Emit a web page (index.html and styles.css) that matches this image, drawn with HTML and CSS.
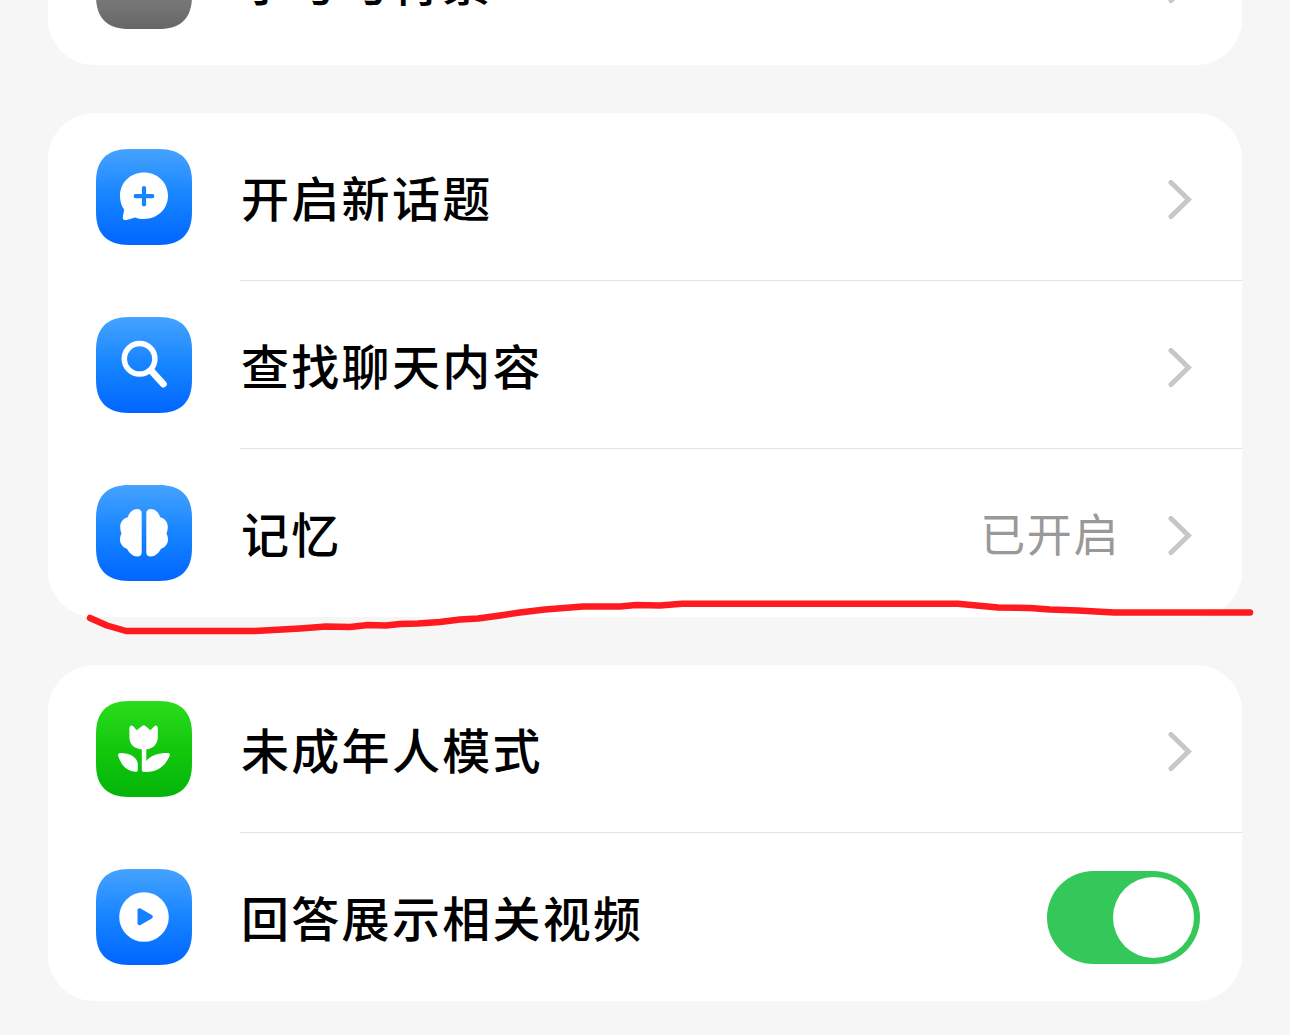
FILE: index.html
```html
<!DOCTYPE html>
<html lang="zh-CN">
<head>
    <meta charset="utf-8">
    <title>设置</title>
    <link rel="stylesheet" href="styles.css">
</head>
<body>
    <!-- shared shapes -->
    <svg class="defs" width="0" height="0">
        <defs>
            <linearGradient id="blue" x1="0" y1="0" x2="0" y2="1">
                <stop offset="0" stop-color="#45a3ff"/>
                <stop offset="0.5" stop-color="#1684ff"/>
                <stop offset="1" stop-color="#0066ff"/>
            </linearGradient>
            <linearGradient id="green" x1="0" y1="0" x2="0" y2="1">
                <stop offset="0" stop-color="#2bdc1c"/>
                <stop offset="0.5" stop-color="#13c70d"/>
                <stop offset="1" stop-color="#04b50a"/>
            </linearGradient>
            <linearGradient id="gray" x1="0" y1="0" x2="0" y2="1">
                <stop offset="0" stop-color="#a0a0a0"/>
                <stop offset="1" stop-color="#666666"/>
            </linearGradient>
            <path id="tile" d="M33 0H63C85 0 96 11 96 33V63C96 85 85 96 63 96H33C11 96 0 85 0 63V33C0 11 11 0 33 0Z"/>
            <path id="chevron" d="M3 3.5L20.5 20.5L3 37.5"/>
        </defs>
    </svg>

    <div class="settings">
        <div class="card">
            <div class="row">
                <svg class="icon" viewBox="0 0 96 96"><use href="#tile" fill="url(#gray)"/></svg>
                <div class="content">
                    <span class="label">字号与背景</span>
                    <svg class="chevron" viewBox="0 0 24 41"><use href="#chevron"/></svg>
                </div>
            </div>
        </div>

        <div class="card">
            <div class="row">
                <svg class="icon" viewBox="0 0 96 96">
                    <use href="#tile" fill="url(#blue)"/>
                    <path fill="#fff" d="M48 23.5C61.500 23.500 72 33.500 72 46.800C72 60 61.500 70 48 70C44.800 70 42 69.400 39.200 68.400L30.500 71C28 71.700 26.300 70 26.800 67.700L28.200 60.700C25.400 57 24 52.200 24 46.800C24 33.500 34.500 23.500 48 23.500Z"/>
                    <path class="plus" d="M48 39V55.500M39.700 47.200H56.300"/>
                </svg>
                <div class="content">
                    <span class="label">开启新话题</span>
                    <svg class="chevron" viewBox="0 0 24 41"><use href="#chevron"/></svg>
                </div>
            </div>
            <div class="row">
                <svg class="icon" viewBox="0 0 96 96">
                    <use href="#tile" fill="url(#blue)"/>
                    <circle class="lens" cx="43.600" cy="41.800" r="15.300"/>
                    <path class="handle" d="M55 53.500L67.300 67"/>
                </svg>
                <div class="content">
                    <span class="label">查找聊天内容</span>
                    <svg class="chevron" viewBox="0 0 24 41"><use href="#chevron"/></svg>
                </div>
            </div>
            <div class="row">
                <svg class="icon" viewBox="0 0 96 96">
                    <use href="#tile" fill="url(#blue)"/>
                    <path id="brain" fill="#fff" d="M41.200 24C44.200 24 45.700 25.500 45.700 28.500V67C45.700 70 44.200 71.500 41.200 71.500C37 71.500 33.500 68.500 31 63.800C27 62.500 24 59 24 54.500C24 52.300 24.700 50.200 25.500 48.500C24.800 46.800 24.200 44.500 24.200 42C24.200 37 27.200 33.300 31.800 32.200C33.500 27 37 24 41.200 24Z"/>
                    <use href="#brain" transform="matrix(-1 0 0 1 96 0)"/>
                </svg>
                <div class="content">
                    <span class="label">记忆</span>
                    <span class="value">已开启</span>
                    <svg class="chevron" viewBox="0 0 24 41"><use href="#chevron"/></svg>
                </div>
            </div>
        </div>

        <div class="card">
            <div class="row">
                <svg class="icon" viewBox="0 0 96 96">
                    <use href="#tile" fill="url(#green)"/>
                    <g fill="#fff">
                        <path d="M33.400 27.500C33.400 24.500 35.500 23.500 37.200 25.300L40.700 29.200L46.200 25C47.300 24 48.300 24 49.400 25L54.500 29.200L58.300 25.300C60 23.500 61.800 24.500 61.800 27.500V36C61.800 43 57.500 47.500 50.300 48.500V60C54.500 54.500 62 52 71.500 52C73.700 52 74.500 53.300 73.500 55.300C69.500 64.500 62 71 50.500 71H48C46.500 71 45.800 70 45.800 68.500V48.500C37.500 47.500 33.400 43 33.400 36Z"/>
                        <path d="M24.500 52C34 52 41.500 56.500 41.800 63V69C41.800 70.300 41 71 39.800 70.800C30.500 70 25 64 22.300 55.300C21.700 53.300 22.500 52 24.500 52Z"/>
                    </g>
                </svg>
                <div class="content">
                    <span class="label">未成年人模式</span>
                    <svg class="chevron" viewBox="0 0 24 41"><use href="#chevron"/></svg>
                </div>
            </div>
            <div class="row">
                <svg class="icon" viewBox="0 0 96 96">
                    <use href="#tile" fill="url(#blue)"/>
                    <circle cx="48" cy="48" r="24.800" fill="#fff"/>
                    <path class="play" d="M43.500 41.300V54.300L54.800 47.800Z"/>
                </svg>
                <div class="content">
                    <span class="label">回答展示相关视频</span>
                    <div class="switch"><div class="knob"></div></div>
                </div>
            </div>
        </div>
    </div>

    <!-- pen stroke over the list -->
    <svg class="stroke" viewBox="0 0 1290 60">
        <path d="M90 28L107 35.500L126 41H255L300 38.500L326 36.500L350 37L368 35L386 35.500L400 34L418 33.500L440 32L460 29.500L478 28.500L500 25.500L520 22.500L545 19.500L583 16.500H620L636 15L660 15.500L682 13.800H958L998 17.500L1030 18L1050 19.500L1078 20.500L1114 22.500H1250"/>
    </svg>
</body>
</html>
```
FILE: styles.css
```css
body {
    margin: 0;
    height: 1035px;
    overflow: hidden;
    position: relative;
    background-color: #f6f6f6;
    font-family: "Noto Sans CJK SC", sans-serif;
    color: #000;
}
.defs {
    position: absolute;
}
/* the list is scrolled, first row is partly off screen */
.settings {
    margin: -103px 48px 0;
    display: flex;
    flex-direction: column;
    gap: 48px;
}
.card {
    background-color: #fff;
    border-radius: 46px;
    overflow: hidden;
}
.row {
    display: flex;
    align-items: center;
    height: 168px;
    padding-left: 48px;
    gap: 48px;
}
.icon {
    width: 96px;
    height: 96px;
    flex-shrink: 0;
}
.content {
    flex: 1;
    height: 100%;
    box-sizing: border-box;
    display: flex;
    align-items: center;
    padding-right: 50px;
    border-bottom: 1px solid #e4e4e4;
}
.row:last-child .content {
    border-bottom-color: transparent;
}
.label {
    flex: 1;
    font-size: 48px;
    font-weight: 500;
    letter-spacing: 2.3px;
    line-height: 72px;
    padding-left: 1px;
    padding-bottom: 2px;
}
.value {
    font-size: 45px;
    font-weight: 400;
    letter-spacing: 1.6px;
    line-height: 66px;
    margin-right: 48px;
    color: #999;
}
.chevron {
    width: 24px;
    height: 41px;
    margin-top: 5px;
    fill: none;
    stroke: #c7c7c7;
    stroke-width: 5px;
    stroke-linecap: round;
}
.plus {
    fill: none;
    stroke: #1684ff;
    stroke-width: 4.2px;
    stroke-linecap: round;
}
.lens {
    fill: none;
    stroke: #fff;
    stroke-width: 5.5px;
}
.handle {
    stroke: #fff;
    stroke-width: 7px;
    stroke-linecap: round;
}
.play {
    fill: #1480ff;
    stroke: #1480ff;
    stroke-width: 4px;
    stroke-linejoin: round;
}
.switch {
    display: flex;
    align-items: center;
    justify-content: flex-end;
    width: 153px;
    height: 93px;
    box-sizing: border-box;
    padding-right: 6px;
    margin-top: 2px;
    margin-right: -8px;
    border-radius: 47px;
    background-color: #34c759;
}
.knob {
    width: 81px;
    height: 81px;
    border-radius: 50%;
    background-color: #fff;
}
.stroke {
    position: absolute;
    left: 0;
    top: 590px;
    width: 1290px;
    height: 60px;
    fill: none;
    stroke: #ff1a1f;
    stroke-width: 6.5px;
    stroke-linecap: round;
    stroke-linejoin: round;
}
```
